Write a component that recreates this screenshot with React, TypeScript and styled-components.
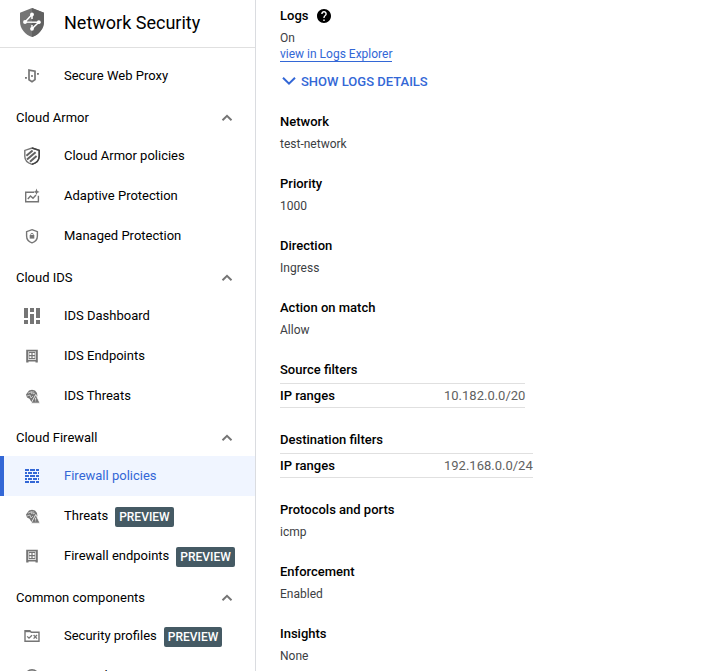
import React from "react";
import styled, { createGlobalStyle } from "styled-components";

const GlobalStyle = createGlobalStyle`
  *, *::before, *::after { box-sizing: border-box; }
  body {
    margin: 0;
    background: #fff;
    color: #000;
    font-family: Roboto, "Liberation Sans", sans-serif;
    font-size: 13px;
    overflow: hidden;
  }
`;

const Page = styled.div`
  display: flex;
  height: 671px;
  overflow: hidden;
`;

const Sidebar = styled.nav`
  width: 256px;
  flex: none;
  border-right: 1px solid #dadce0;
  overflow: hidden;
`;

const SidebarHeader = styled.header`
  display: flex;
  align-items: center;
  height: 48px;
  padding: 0 0 1px 20px;
  margin-bottom: 8px;
  gap: 20px;
  border-bottom: 1px solid #e0e0e0;
`;

const ProductName = styled.h1`
  margin: 0;
  font-size: 18px;
  font-weight: 400;
  line-height: 24px;
`;

const GroupHeader = styled.div`
  display: flex;
  align-items: center;
  justify-content: space-between;
  height: 40px;
  padding: 3px 22px 0 16px;
`;

const NavItem = styled.a<{ $active?: boolean }>`
  display: flex;
  align-items: center;
  height: 40px;
  padding-left: ${(p) => (p.$active ? 12 : 16)}px;
  border-left: ${(p) => (p.$active ? "4px solid #3367d6" : "none")};
  background: ${(p) => (p.$active ? "#f0f5ff" : "transparent")};
  color: ${(p) => (p.$active ? "#3367d6" : "#000")};
  white-space: nowrap;
`;

const NavIcon = styled.svg`
  width: 32px;
  height: 32px;
  flex: none;
  margin-right: 16px;
`;

const NavLabel = styled.span`
  line-height: 20px;
`;

const PreviewBadge = styled.span`
  margin: 2px 0 0 7px;
  padding: 0 4px;
  height: 20px;
  line-height: 20px;
  border-radius: 2px;
  background: #455a64;
  color: #fff;
  font-size: 12px;
  font-weight: 500;
`;

const Details = styled.main`
  display: flex;
  flex-direction: column;
  align-items: flex-start;
  padding: 6px 0 0 24px;
`;

const Field = styled.section`
  flex: none;
  height: 62px;
`;

const FilterField = styled.section`
  flex: none;
  height: 70px;
`;

const LogsField = styled.section`
  flex: none;
  height: 106px;
`;

const FieldTitle = styled.h2`
  display: flex;
  align-items: center;
  gap: 9px;
  margin: 0;
  height: 20px;
  font-size: 13px;
  font-weight: 500;
  line-height: 20px;
`;

const FieldValue = styled.div`
  margin-top: 3px;
  font-size: 12px;
  line-height: 18px;
  color: #3c4043;
`;

const ExplorerLink = styled.a`
  display: block;
  width: max-content;
  height: 15px;
  font-size: 12px;
  line-height: 14px;
  color: #3367d6;
  border-bottom: 1px solid #3367d6;
`;

const DetailsToggle = styled.div`
  display: flex;
  align-items: center;
  gap: 5px;
  margin: 9px 0 0 2px;
  height: 20px;
  color: #3367d6;
  font-weight: 500;
`;

const FilterRow = styled.div`
  display: flex;
  align-items: center;
  height: 25px;
  margin-top: 3px;
  border-top: 1px solid #e0e0e0;
  border-bottom: 1px solid #e0e0e0;
`;

const FilterName = styled.span`
  width: 164px;
  font-weight: 500;
`;

const FilterValue = styled.span`
  color: #616161;
`;

type IconName =
  | "proxy" | "armor" | "adaptive" | "managed" | "dashboard"
  | "endpoint" | "threat" | "firewall" | "profiles" | "ssl";

const shapes: Record<IconName, React.ReactNode> = {
  proxy: (
    <g fill="none" stroke="#757575" strokeWidth="1.7">
      <path d="M13 10.1 19 11.2V19.6L16 21.8 13 19.8Z" />
      <path d="M15.2 16h1.6M9 17.9h1.9M21 13.9h1.9" strokeWidth="1.9" />
    </g>
  ),
  armor: (
    <g fill="none">
      <path d="M16 8 23.2 10.4V16.2C23.2 20 20.5 22.9 16 24.3 11.5 22.9 8.8 20 8.8 16.2V10.4Z" stroke="#757575" strokeWidth="1.4" />
      <path d="M16 8 23.2 10.4V16.2C23.2 20 20.5 22.9 16 24.3" stroke="#424242" strokeWidth="1.5" />
      <path d="M10.4 15.8 16.6 10.6M11 19.4 19.6 12.2M14 21.8 20.6 16" stroke="#616161" strokeWidth="2" />
    </g>
  ),
  adaptive: (
    <g fill="none" stroke="#757575" strokeWidth="1.4">
      <path d="M18 12.2H9.7V21.8H22.4V15.8" />
      <path d="M11.8 19 14.5 16 17 18.3 20 15" />
      <path d="M20.5 8.6 21.4 11 23.7 11.9 21.4 12.8 20.5 15.1 19.6 12.8 17.3 11.9 19.6 11Z" fill="#757575" stroke="none" />
    </g>
  ),
  managed: (
    <g fill="none" stroke="#757575">
      <path d="M16 9.7 21.4 11.7V16C21.4 19.2 19.1 21.8 16 22.8 12.9 21.8 10.6 19.2 10.6 16V11.7Z" strokeWidth="1.4" />
      <rect x="13.7" y="15" width="4.6" height="3.6" fill="#757575" stroke="none" />
      <path d="M14.7 15.3v-.7a1.3 1.3 0 0 1 2.6 0v.7" strokeWidth=".9" />
    </g>
  ),
  dashboard: (
    <path fill="#757575" d="M8 8h4v10H8zM8 20h4v4H8zM14 8h4v4h-4zM14 14h4v10h-4zM20 8h4v10h-4zM20 20h4v4h-4z" />
  ),
  endpoint: (
    <g fill="#757575">
      <path fillRule="evenodd" d="M10.2 9.8h11.6v12.6H19.5V21.6H12.5V22.4H10.2ZM12 11.5V19.8H20V11.5Z" />
      <path fillRule="evenodd" d="M12.6 12.1h6.8v6.8h-6.8zM13.4 13v1.9h2V13zM16.6 13v1.9h2V13zM13.4 16.2v1.8h2v-1.8zM16.6 16.2v1.8h2v-1.8z" />
    </g>
  ),
  threat: (
    <g>
      <path fill="#757575" d="M13 10.5 16 9.8 19 10.5 21 13 21.4 16 18 22H15.5L13.5 18.7 11 17.5 10 14.5Z" />
      <path d="M12 13.2 14.5 12 16 14M17 11v3l2-1M11 16l3-1 1 3 2-2M15 11l1 2" fill="none" stroke="#eee" strokeWidth=".65" />
      <path d="M19.8 14.5 24 23.2H15.1Z" fill="#757575" stroke="#fff" strokeWidth=".8" />
      <path d="M19.6 17.8v2M19.6 20.5v.8" stroke="#fff" strokeWidth=".8" />
    </g>
  ),
  firewall: (
    <path fill="#3367d6" d="M9 9h4v2H9zM14 9h5v2h-5zM20 9h3v2h-3zM9 12h2v2H9zM12 12h4v2h-4zM17 12h4v2h-4zM22 12h1v2h-1zM9 15h4v2H9zM14 15h5v2h-5zM20 15h3v2h-3zM9 18h2v2H9zM12 18h4v2h-4zM17 18h4v2h-4zM22 18h1v2h-1zM9 21h4v2H9zM14 21h5v2h-5zM20 21h3v2h-3z" />
  ),
  profiles: (
    <g fill="none" stroke="#757575" strokeWidth="1.4">
      <path d="M9 10.7h4.8l1.5 1.5H23v9.1H9Z" />
      <path d="M9 11.5h5.5" />
      <path d="M11.2 16.4 13 18.2 16 15.2M17.6 15 21 18.6M21 15 17.6 18.6" strokeWidth="1.3" />
    </g>
  ),
  ssl: (
    <g fill="none" stroke="#757575" strokeWidth="1.6">
      <circle cx="16" cy="16.3" r="6.5" />
      <path d="M9.5 16.5h13M16 10.5v13" />
    </g>
  ),
};

const Item = ({ icon, label, active, preview }: {
  icon: IconName; label: string; active?: boolean; preview?: boolean;
}) => (
  <NavItem $active={active}>
    <NavIcon viewBox="0 0 32 32" aria-hidden="true">{shapes[icon]}</NavIcon>
    <NavLabel>{label}</NavLabel>
    {preview && <PreviewBadge>PREVIEW</PreviewBadge>}
  </NavItem>
);

const Group = ({ label }: { label: string }) => (
  <GroupHeader>
    {label}
    <svg width="12" height="8" viewBox="0 0 12 8" aria-hidden="true">
      <path d="M1.5 6.3 6 1.9 10.5 6.3" fill="none" stroke="#757575" strokeWidth="2" />
    </svg>
  </GroupHeader>
);

const ProductLogo = () => (
  <svg width="24" height="30" viewBox="0 0 24 30" aria-hidden="true">
    <path fill="#757575" d="M12 0 24 4.7V13.5C24 20.8 19 26.7 12 29 5 26.7 0 20.8 0 13.5V4.7Z" />
    <path fill="#616161" d="M12 0 24 4.7V13.5C24 20.8 19 26.7 12 29Z" />
    <path d="M12 6.5V11M12 6.5 5 14 18.8 14.2 12 20.8V17" fill="none" stroke="#fff" strokeWidth="1.5" />
    <g fill="#fff">
      <circle cx="12" cy="6.5" r="1.9" />
      <circle cx="5" cy="14" r="1.9" />
      <circle cx="18.8" cy="14.2" r="1.9" />
      <circle cx="12" cy="20.8" r="1.9" />
    </g>
  </svg>
);

const HelpIcon = () => (
  <svg width="14" height="14" viewBox="2 2 20 20" aria-hidden="true">
    <path d="M12 2C6.48 2 2 6.48 2 12s4.48 10 10 10 10-4.48 10-10S17.52 2 12 2zm1 17h-2v-2h2v2zm2.07-7.75-.9.92C13.45 12.9 13 13.5 13 15h-2v-.5c0-1.1.45-2.1 1.17-2.83l1.24-1.26c.37-.36.59-.86.59-1.41 0-1.1-.9-2-2-2s-2 .9-2 2H8c0-2.21 1.79-4 4-4s4 1.79 4 4c0 .88-.36 1.68-.93 2.25z" />
  </svg>
);

const TextField = ({ title, value }: { title: string; value: string }) => (
  <Field>
    <FieldTitle>{title}</FieldTitle>
    <FieldValue>{value}</FieldValue>
  </Field>
);

const Filter = ({ title, value }: { title: string; value: string }) => (
  <FilterField>
    <FieldTitle>{title}</FieldTitle>
    <FilterRow>
      <FilterName>IP ranges</FilterName>
      <FilterValue>{value}</FilterValue>
    </FilterRow>
  </FilterField>
);

export default function App() {
  return (
    <>
      <GlobalStyle />
      <Page>
        <Sidebar>
          <SidebarHeader>
            <ProductLogo />
            <ProductName>Network Security</ProductName>
          </SidebarHeader>
          <Item icon="proxy" label="Secure Web Proxy" />
          <Group label="Cloud Armor" />
          <Item icon="armor" label="Cloud Armor policies" />
          <Item icon="adaptive" label="Adaptive Protection" />
          <Item icon="managed" label="Managed Protection" />
          <Group label="Cloud IDS" />
          <Item icon="dashboard" label="IDS Dashboard" />
          <Item icon="endpoint" label="IDS Endpoints" />
          <Item icon="threat" label="IDS Threats" />
          <Group label="Cloud Firewall" />
          <Item icon="firewall" label="Firewall policies" active />
          <Item icon="threat" label="Threats" preview />
          <Item icon="endpoint" label="Firewall endpoints" preview />
          <Group label="Common components" />
          <Item icon="profiles" label="Security profiles" preview />
          <Item icon="ssl" label="SSL policies" />
        </Sidebar>
        <Details>
          <LogsField>
            <FieldTitle>Logs <HelpIcon /></FieldTitle>
            <FieldValue>On</FieldValue>
            <ExplorerLink>view in Logs Explorer</ExplorerLink>
            <DetailsToggle>
              <svg width="14" height="10" viewBox="0 0 14 10" aria-hidden="true">
                <path d="M1 1.7 7 7.7 13 1.7" fill="none" stroke="#3367d6" strokeWidth="2" />
              </svg>
              SHOW LOGS DETAILS
            </DetailsToggle>
          </LogsField>
          <TextField title="Network" value="test-network" />
          <TextField title="Priority" value="1000" />
          <TextField title="Direction" value="Ingress" />
          <TextField title="Action on match" value="Allow" />
          <Filter title="Source filters" value="10.182.0.0/20" />
          <Filter title="Destination filters" value="192.168.0.0/24" />
          <TextField title="Protocols and ports" value="icmp" />
          <TextField title="Enforcement" value="Enabled" />
          <TextField title="Insights" value="None" />
        </Details>
      </Page>
    </>
  );
}
